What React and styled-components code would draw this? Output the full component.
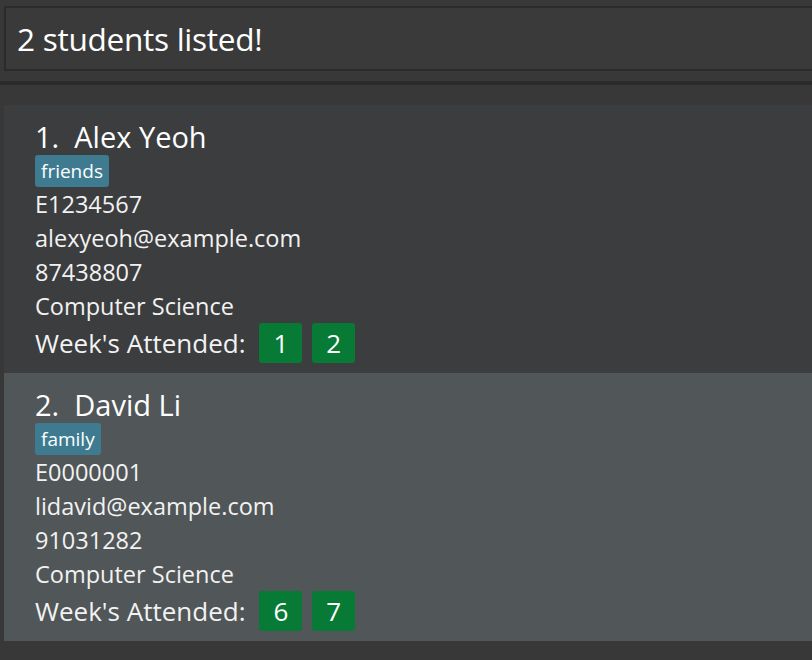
import React from "react";
import styled, { createGlobalStyle } from "styled-components";

const GlobalStyle = createGlobalStyle`
  html, body {
    margin: 0;
    padding: 0;
    background: #383838;
    overflow: hidden;
  }
  body {
    font-family: "Open Sans", "Noto Sans", sans-serif;
    color: #ffffff;
  }
`;

const Page = styled.div`
  display: flex;
  flex-direction: column;
  width: 100%;
  height: 660px;
  background: #383838;
`;

const ResultBox = styled.div`
  display: flex;
  align-items: center;
  box-sizing: border-box;
  height: 65px;
  margin: 6px 0 0 4px;
  padding-left: 11px;
  border: 2px solid #2b2b2b;
  border-right: none;
  background: #3a3a3a;
  font-size: 31.6px;
  color: #ffffff;
  letter-spacing: -0.3px;
`;

const Divider = styled.div`
  height: 4px;
  margin-top: 10px;
  background: #2b2b2b;
`;

const List = styled.div`
  display: flex;
  flex-direction: column;
  padding: 20px 0 0 4px;
`;

const Card = styled.div`
  box-sizing: border-box;
  height: 268px;
  padding: 12px 0 0 31px;
  background: ${(p) => (p.$odd ? "#515658" : "#3c3d3f")};
  display: flex;
  flex-direction: column;
`;

const Name = styled.div`
  font-size: 29px;
  line-height: 40px;
  color: #ffffff;
  white-space: pre;
`;

const Tags = styled.div`
  display: flex;
  gap: 6px;
  margin-top: -2px;
`;

const Tag = styled.span`
  background: #3e7b91;
  color: #ffffff;
  font-size: 19px;
  line-height: 32px;
  padding: 0 6px;
  border-radius: 3px;
`;

const Field = styled.div`
  font-size: 23.5px;
  line-height: 34px;
  color: #f2f2f2;
`;

const WeekRow = styled.div`
  display: flex;
  align-items: center;
  gap: 10px;
  height: 40px;
`;

const WeekLabel = styled.span`
  font-size: 26px;
  color: #f2f2f2;
  margin-right: 4px;
`;

const WeekBadge = styled.span`
  display: inline-flex;
  align-items: center;
  justify-content: center;
  min-width: 41px;
  height: 40px;
  padding: 0 14px;
  box-sizing: border-box;
  background: #077a35;
  border-radius: 3px;
  font-size: 26px;
  color: #ffffff;
`;

const students = [
  {
    name: "Alex Yeoh",
    tags: ["friends"],
    id: "E1234567",
    email: "alexyeoh@example.com",
    phone: "87438807",
    major: "Computer Science",
    weeks: [1, 2],
  },
  {
    name: "David Li",
    tags: ["family"],
    id: "E0000001",
    email: "lidavid@example.com",
    phone: "91031282",
    major: "Computer Science",
    weeks: [6, 7],
  },
];

export default function App() {
  return (
    <Page>
      <GlobalStyle />
      <ResultBox>{students.length} students listed!</ResultBox>
      <Divider />
      <List>
        {students.map((s, i) => (
          <Card key={s.id} $odd={i % 2 === 1}>
            <Name>{`${i + 1}.  ${s.name}`}</Name>
            <Tags>
              {s.tags.map((t) => (
                <Tag key={t}>{t}</Tag>
              ))}
            </Tags>
            <Field>{s.id}</Field>
            <Field>{s.email}</Field>
            <Field>{s.phone}</Field>
            <Field>{s.major}</Field>
            <WeekRow>
              <WeekLabel>Week's Attended:</WeekLabel>
              {s.weeks.map((w) => (
                <WeekBadge key={w}>{w}</WeekBadge>
              ))}
            </WeekRow>
          </Card>
        ))}
      </List>
    </Page>
  );
}
